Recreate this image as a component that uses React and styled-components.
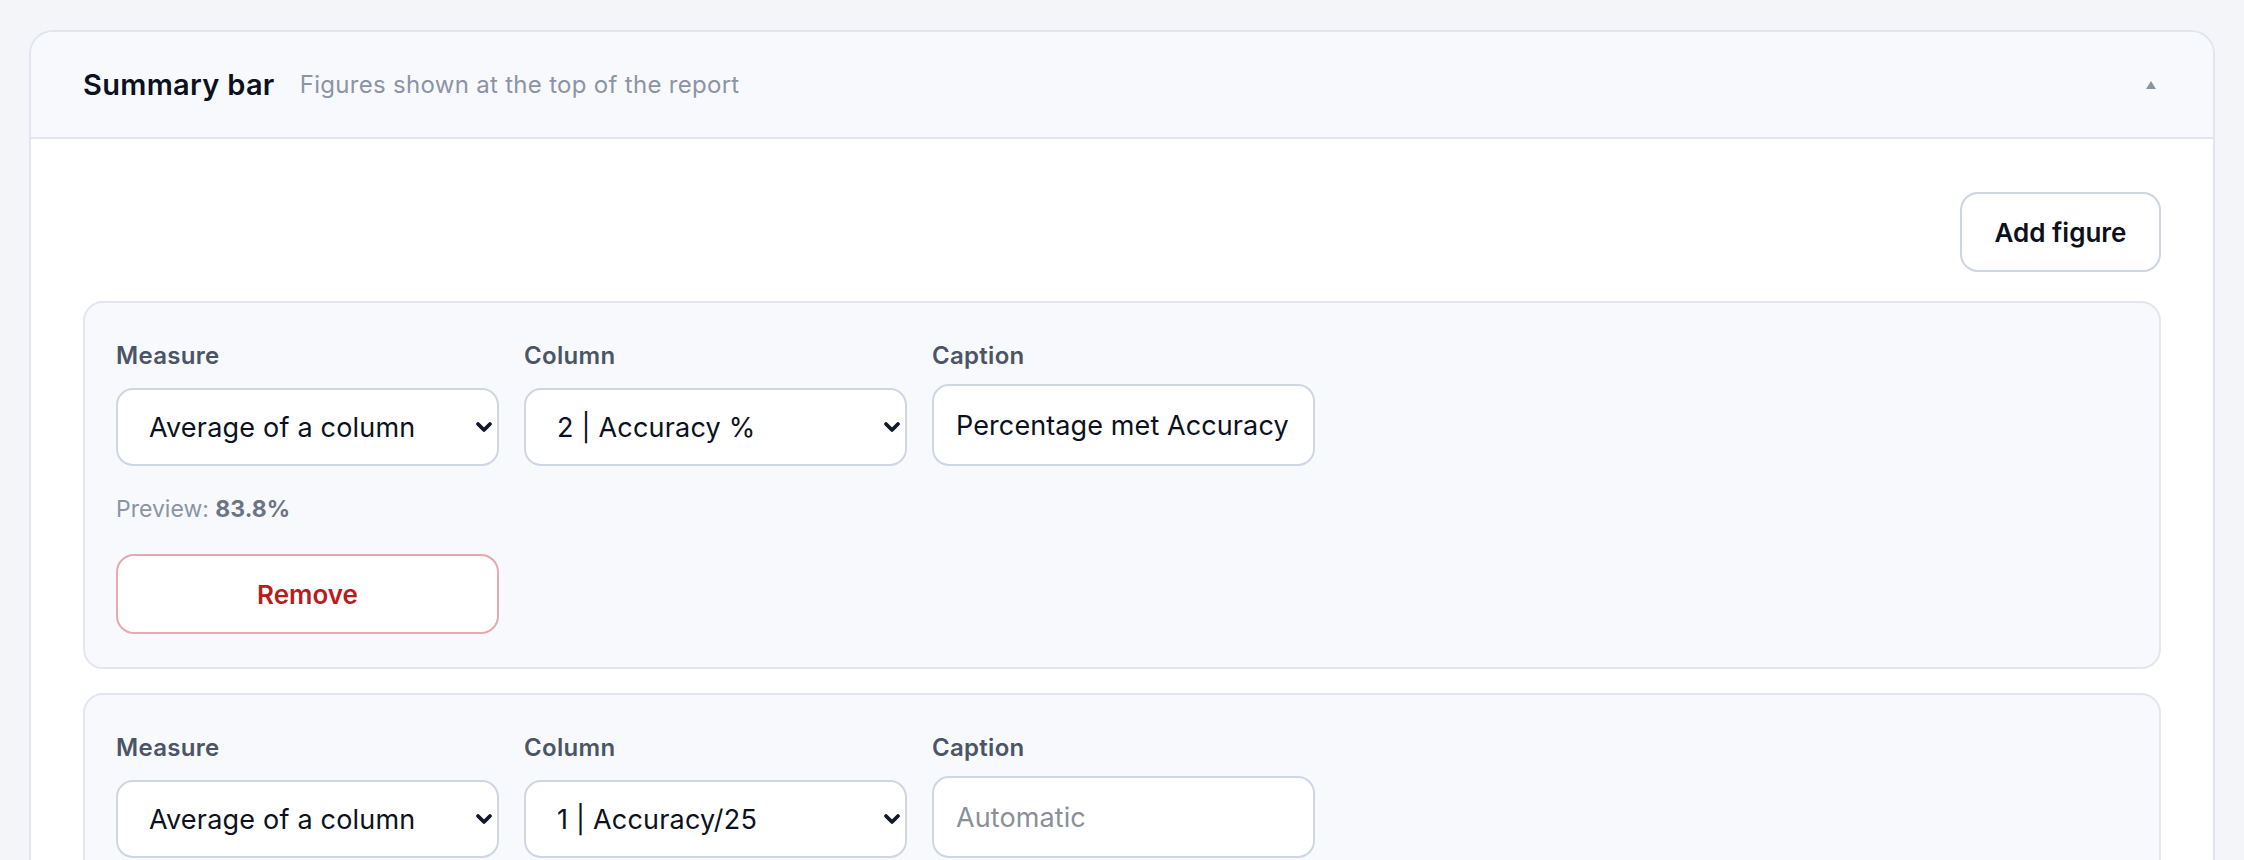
import React from 'react';
import styled, { createGlobalStyle } from 'styled-components';

const GlobalStyle = createGlobalStyle`
  body {
    margin: 0;
    background-color: #f3f5f9;
    font-family: Inter, "Noto Sans", "Liberation Sans", sans-serif;
    color: #0f172a;
  }
`;

const StyledPage = styled.div`
  padding: 30px 29px 0 29px;
`;
const StyledPanel = styled.section`
  background-color: #ffffff;
  border: 2px solid #e1e6ee;
  border-bottom: none;
  border-radius: 24px 24px 0 0;
  overflow: hidden;
`;
const StyledHeader = styled.div`
  display: flex;
  align-items: center;
  height: 105px;
  padding: 0 57px 0 52px;
  background-color: #f8f9fc;
  border-bottom: 2px solid #e1e6ee;
`;
const StyledTitle = styled.h2`
  margin: 0;
  font-size: 29px;
  letter-spacing: 0.3px;
  font-weight: 600;
  color: #0b1120;
`;
const StyledSubtitle = styled.span`
  margin-left: 25px;
  font-size: 24px;
  letter-spacing: 0.3px;
  color: #8b94a5;
  flex: 1;
`;
const StyledCaret = styled.span`
  width: 0;
  height: 0;
  border-left: 5px solid transparent;
  border-right: 5px solid transparent;
  border-bottom: 8px solid #8b94a5;
`;
const StyledBody = styled.div`
  padding: 53px 52px 0 52px;
  display: flex;
  flex-direction: column;
`;
const StyledToolbar = styled.div`
  display: flex;
  justify-content: flex-end;
  margin-bottom: 29px;
`;
const StyledButton = styled.button`
  height: 80px;
  width: ${({ wide }) => (wide ? '383px' : '201px')};
  border-radius: 18px;
  background-color: #ffffff;
  border: 2px solid ${({ danger }) => (danger ? '#e5a9af' : '#cdd5e1')};
  color: ${({ danger }) => (danger ? '#b91c1c' : '#0b1120')};
  font-family: inherit;
  font-size: 26px;
  font-weight: 600;
  cursor: pointer;
`;
const StyledCard = styled.div`
  background-color: #f8f9fc;
  border: 2px solid #e2e7ef;
  border-radius: 20px;
  padding: 38px 31px 33px 31px;
  margin-bottom: 24px;
`;
const StyledFields = styled.div`
  display: flex;
  align-items: flex-end;
  gap: 25px;
`;
const StyledField = styled.label`
  display: flex;
  flex-direction: column;
  width: 383px;
`;
const StyledLabel = styled.span`
  font-size: 24px;
  letter-spacing: 0.3px;
  line-height: 30px;
  font-weight: 600;
  color: #4b5565;
  margin-bottom: ${({ tall }) => (tall ? '13px' : '17px')};
`;
const StyledSelectWrap = styled.div`
  position: relative;
`;
const StyledSelect = styled.select`
  appearance: none;
  width: 100%;
  height: 78px;
  padding: 0 40px 0 31px;
  border: 2px solid #cfd6e2;
  border-radius: 17px;
  background-color: #ffffff;
  font-family: inherit;
  font-size: 27px;
  letter-spacing: 0.2px;
  color: #0b1120;
  box-sizing: border-box;
`;
const StyledChevron = styled.svg`
  position: absolute;
  right: 6px;
  top: 50%;
  width: 18px;
  height: 12px;
  margin-top: -6px;
  pointer-events: none;
`;
const StyledInput = styled.input`
  width: 100%;
  height: 82px;
  padding: 0 18px 0 22px;
  border: 2px solid #cfd6e2;
  border-radius: 17px;
  background-color: #ffffff;
  font-family: inherit;
  font-size: 27px;
  letter-spacing: 0.1px;
  color: #0b1120;
  box-sizing: border-box;
  &::placeholder {
    color: #8a8f99;
  }
`;
const StyledPreview = styled.p`
  margin: 28px 0 30px 0;
  font-size: 23px;
  line-height: 30px;
  color: #8b94a5;
  b {
    color: #6b7486;
    font-weight: 700;
  }
`;

const figures = [
  { id: 1, measure: 'Average of a column', column: '2 | Accuracy %', caption: 'Percentage met Accuracy', preview: '83.8%' },
  { id: 2, measure: 'Average of a column', column: '1 | Accuracy/25', caption: '', preview: null },
];

const Chevron = () => (
  <StyledChevron viewBox="0 0 18 12">
    <path d="M3 3l6 6 6-6" fill="none" stroke="#111827" strokeWidth="3.8" strokeLinecap="round" strokeLinejoin="round" />
  </StyledChevron>
);

const SelectField = ({ label, value }) => (
  <StyledField>
    <StyledLabel>{label}</StyledLabel>
    <StyledSelectWrap>
      <StyledSelect defaultValue={value}>
        <option>{value}</option>
      </StyledSelect>
      <Chevron />
    </StyledSelectWrap>
  </StyledField>
);

const FigureCard = ({ figure }) => (
  <StyledCard>
    <StyledFields>
      <SelectField label="Measure" value={figure.measure} />
      <SelectField label="Column" value={figure.column} />
      <StyledField>
        <StyledLabel tall>Caption</StyledLabel>
        <StyledInput defaultValue={figure.caption} placeholder="Automatic" />
      </StyledField>
    </StyledFields>
    {figure.preview && (
      <>
        <StyledPreview>
          Preview: <b>{figure.preview}</b>
        </StyledPreview>
        <StyledButton danger wide>
          Remove
        </StyledButton>
      </>
    )}
  </StyledCard>
);

const App = () => (
  <>
    <GlobalStyle />
    <StyledPage>
      <StyledPanel>
        <StyledHeader>
          <StyledTitle>Summary bar</StyledTitle>
          <StyledSubtitle>Figures shown at the top of the report</StyledSubtitle>
          <StyledCaret />
        </StyledHeader>
        <StyledBody>
          <StyledToolbar>
            <StyledButton>Add figure</StyledButton>
          </StyledToolbar>
          {figures.map(figure => (
            <FigureCard key={figure.id} figure={figure} />
          ))}
        </StyledBody>
      </StyledPanel>
    </StyledPage>
  </>
);

export default App;
